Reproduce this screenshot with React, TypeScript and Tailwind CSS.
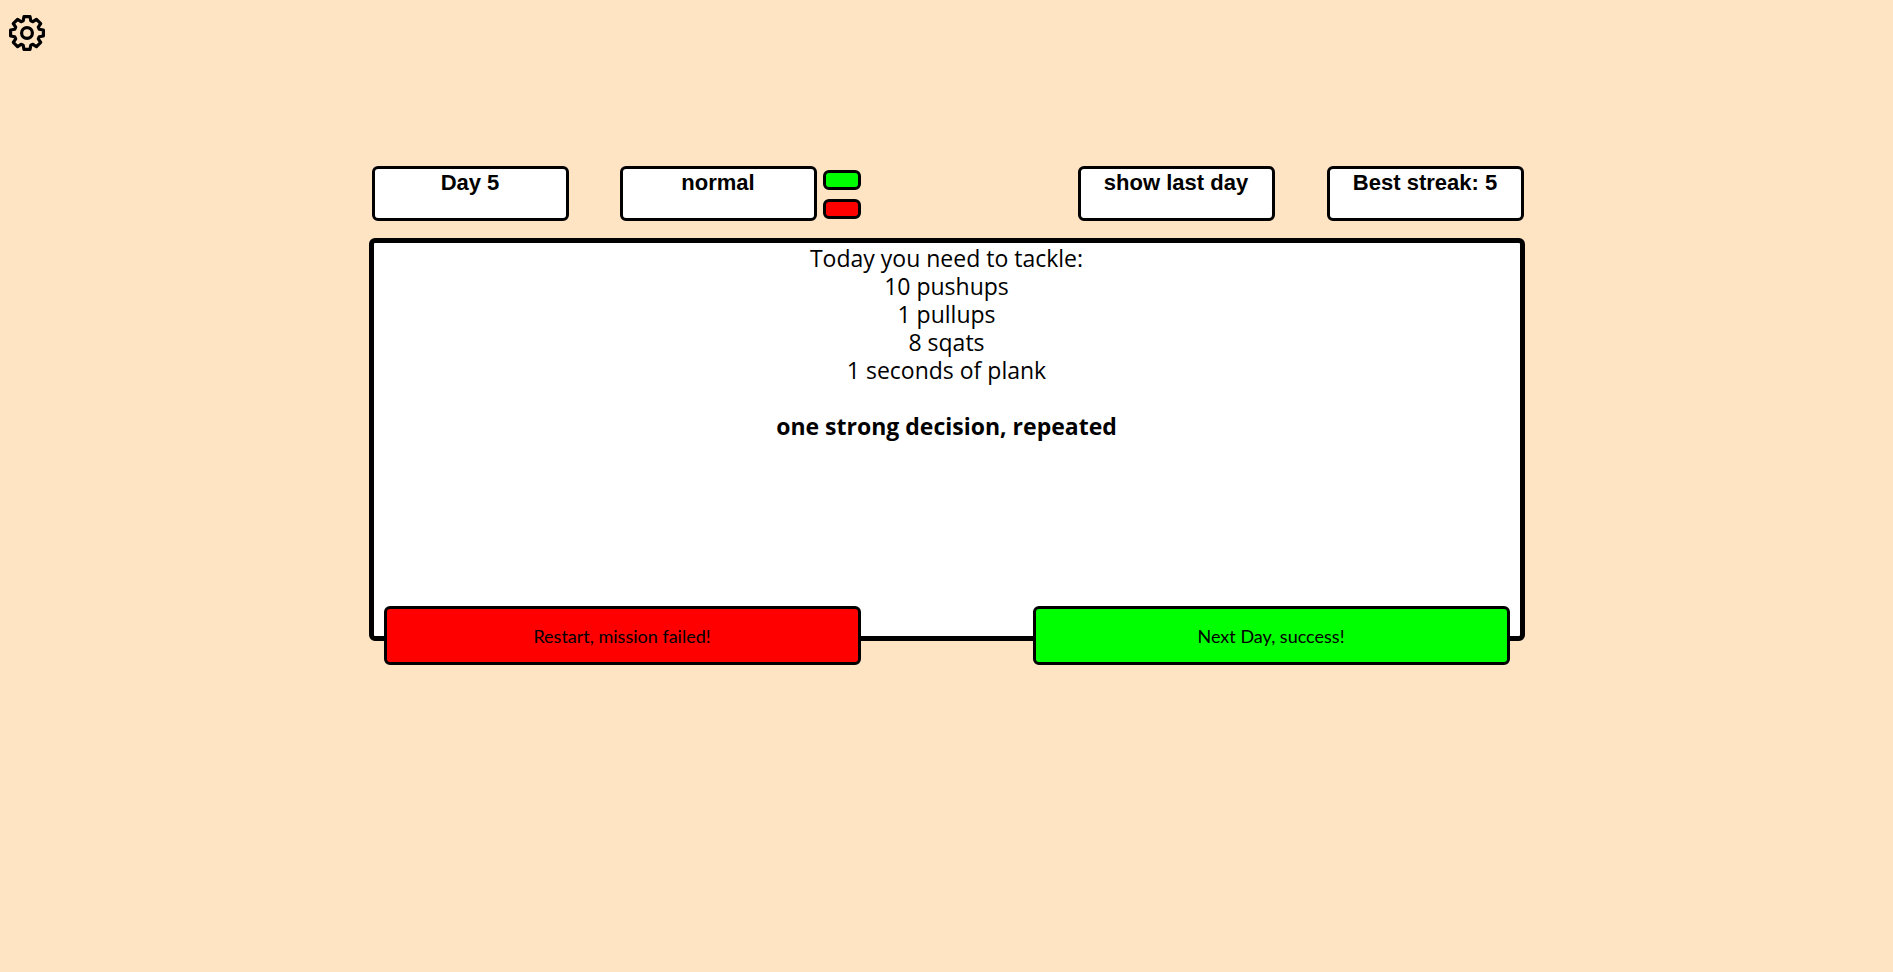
const TOOTH: [number, number][] = [
  [-3.8, -12.2],
  [-3, -16.4],
  [3, -16.4],
  [3.8, -12.2],
];

const GEAR_POINTS = Array.from({ length: 8 }, (_, i) => {
  const a = (i * Math.PI) / 4;
  return TOOTH.map(([x, y]) =>
    [x * Math.cos(a) - y * Math.sin(a), x * Math.sin(a) + y * Math.cos(a)]
      .map((n) => n.toFixed(2))
      .join(","),
  ).join(" ");
}).join(" ");

function GearIcon() {
  return (
    <svg
      viewBox="-18 -18 36 36"
      className="size-9"
      fill="none"
      stroke="currentColor"
      strokeWidth="3.2"
      strokeLinejoin="round"
      aria-hidden="true"
    >
      <polygon points={GEAR_POINTS} />
      <circle r="5.4" />
    </svg>
  );
}

const statBox =
  "h-[55px] w-[197px] rounded-md border-3 border-black bg-white text-center font-['Liberation_Sans',Arial,sans-serif] text-[22px] leading-[28px] font-bold";
const pill = "h-5 w-[38px] rounded-md border-3 border-black";
const action =
  "h-[59px] w-[477px] rounded-md border-3 border-black font-[Lato,sans-serif] text-[18px] leading-6";

const exercises = ["10 pushups", "1 pullups", "8 sqats", "1 seconds of plank"];

export default function App() {
  return (
    <div className="min-h-screen bg-[#ffe4c4] text-black">
      <header className="h-[166px] px-[9px] pt-[15px]">
        <button type="button" aria-label="Settings" className="block">
          <GearIcon />
        </button>
      </header>

      <main className="mx-auto w-[1156px] max-w-full">
        <div className="flex justify-between pr-px pl-[3px]">
          <div className="flex">
            <div className={statBox}>Day 5</div>
            <div className={`${statBox} ml-[51px]`}>normal</div>
            <div className="ml-[6px] flex flex-col gap-[9px] pt-1">
              <button type="button" aria-label="Raise difficulty" className={`${pill} bg-[#00ff00]`} />
              <button type="button" aria-label="Lower difficulty" className={`${pill} bg-[#ff0000]`} />
            </div>
          </div>
          <div className="flex gap-[52px]">
            <button type="button" className={`${statBox} flex justify-center`}>
              show last day
            </button>
            <div className={statBox}>Best streak: 5</div>
          </div>
        </div>

        <section className="mt-[17px] h-[403px] rounded-md border-5 border-black bg-white pt-px text-center font-['Open_Sans',sans-serif] text-[23px] leading-7">
          <p>Today you need to tackle:</p>
          <ul>
            {exercises.map((e) => (
              <li key={e}>{e}</li>
            ))}
          </ul>
          <p className="mt-7 font-bold">one strong decision, repeated</p>
        </section>

        <div className="relative -mt-[35px] flex justify-between px-[15px]">
          <button type="button" className={`${action} bg-[#ff0000]`}>
            Restart, mission failed!
          </button>
          <button type="button" className={`${action} bg-[#00ff00]`}>
            Next Day, success!
          </button>
        </div>
      </main>
    </div>
  );
}
